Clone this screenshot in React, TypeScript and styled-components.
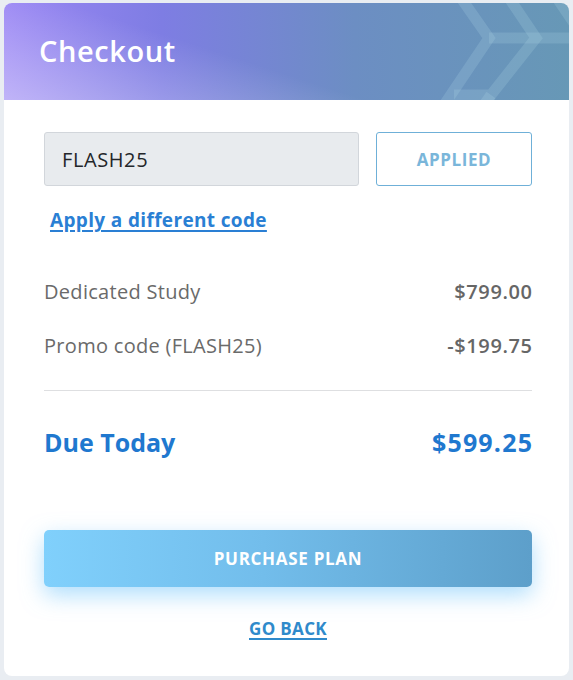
import React from "react";
import styled, { createGlobalStyle } from "styled-components";

const Global = createGlobalStyle`
  html, body { margin: 0; padding: 0; background: #e9edf2; }
  body { font-family: "Open Sans", "Liberation Sans", sans-serif; }
  * { box-sizing: border-box; }
`;

const Page = styled.div`
  padding: 3px 4px 4px 4px;
`;

const Card = styled.div`
  width: 565px;
  height: 673px;
  background: #ffffff;
  border-radius: 8px;
  overflow: hidden;
  display: flex;
  flex-direction: column;
`;

const Header = styled.div`
  position: relative;
  height: 97px;
  padding-left: 35px;
  display: flex;
  align-items: center;
  background:
    linear-gradient(18deg, rgba(255,255,255,0.38) 0%, rgba(255,255,255,0) 42%),
    linear-gradient(90deg, #9a86f4 0%, #7e7de3 28%, #6c8ec3 62%, #6798b6 100%);
  overflow: hidden;
`;

const Title = styled.h1`
  margin: 0 0 2px 0;
  font-size: 29px;
  font-weight: 600;
  color: #ffffff;
  letter-spacing: 0.6px;
  position: relative;
`;

const Pattern = styled.svg`
  position: absolute;
  top: 0;
  left: 0;
  width: 565px;
  height: 97px;
  pointer-events: none;
`;

const Body = styled.div`
  padding: 32px 37px 0 40px;
  display: flex;
  flex-direction: column;
`;

const PromoRow = styled.div`
  display: flex;
  gap: 17px;
`;

const CodeInput = styled.div`
  flex: 1;
  height: 54px;
  background: #e8ebee;
  border: 1px solid #d2d6db;
  border-radius: 3px;
  display: flex;
  align-items: center;
  padding-left: 17px;
  font-size: 20px;
  font-weight: 500;
  letter-spacing: 0.6px;
  color: #23262a;
`;

const OutlineButton = styled.button`
  width: 156px;
  height: 54px;
  background: #ffffff;
  border: 1px solid #6fb0d8;
  border-radius: 3px;
  font-family: inherit;
  font-size: 17px;
  font-weight: 700;
  color: #7ab6da;
  letter-spacing: 0.6px;
`;

const TextLink = styled.a<{ $size: number; $color: string }>`
  font-size: ${(p) => p.$size}px;
  font-weight: 700;
  color: ${(p) => p.$color};
  letter-spacing: 0.35px;
  text-decoration: underline;
  text-underline-offset: 3px;
  text-decoration-thickness: 2px;
  cursor: pointer;
`;

const LinkWrap = styled.div`
  padding: 21px 0 0 6px;
  height: 62px;
`;

const Rows = styled.div`
  display: flex;
  flex-direction: column;
  padding-top: 16px;
`;

const Row = styled.div<{ $total?: boolean }>`
  display: flex;
  justify-content: space-between;
  align-items: center;
  height: ${(p) => (p.$total ? "52px" : "54px")};
  color: ${(p) => (p.$total ? "#1f78cf" : "#6a6a6a")};
  font-size: ${(p) => (p.$total ? "25px" : "20px")};
  font-weight: ${(p) => (p.$total ? 700 : 400)};
  letter-spacing: ${(p) => (p.$total ? "0px" : "0.3px")};
`;

const Amount = styled.span<{ $total?: boolean }>`
  font-weight: ${(p) => (p.$total ? 700 : 600)};
  color: ${(p) => (p.$total ? "#1f78cf" : "#666666")};
  letter-spacing: ${(p) => (p.$total ? "1.2px" : "0.6px")};
  margin-right: ${(p) => (p.$total ? "-1.2px" : "-0.6px")};
`;

const Divider = styled.hr`
  border: none;
  border-top: 1px solid #dedfe1;
  margin: 18px 0 25px 0;
`;

const PrimaryButton = styled.button`
  margin-top: 62px;
  height: 57px;
  border: none;
  border-radius: 5px;
  background: linear-gradient(90deg, #80d0fc 0%, #72bdeb 45%, #5d9fca 100%);
  box-shadow: 0 8px 22px rgba(110, 195, 250, 0.55);
  color: #ffffff;
  font-family: inherit;
  font-size: 17px;
  font-weight: 700;
  letter-spacing: 0.7px;
`;

const Footer = styled.div`
  display: flex;
  justify-content: center;
  padding-top: 30px;
`;

export default function App() {
  return (
    <>
      <Global />
      <Page>
        <Card>
          <Header>
            <Pattern viewBox="0 0 565 97">
              <g stroke="rgba(190,225,240,0.18)" strokeWidth="11" fill="none">
                <polyline points="457,-5 485,35 440,102" />
                <polyline points="485,35 570,35" />
                <polyline points="505,-5 532,35 487,92 450,92" />
                <polyline points="553,-5 580,35" />
                <polyline points="487,92 480,102" />
              </g>
            </Pattern>
            <Title>Checkout</Title>
          </Header>
          <Body>
            <PromoRow>
              <CodeInput>FLASH25</CodeInput>
              <OutlineButton>APPLIED</OutlineButton>
            </PromoRow>
            <LinkWrap>
              <TextLink $size={19} $color="#2a7fd4">Apply a different code</TextLink>
            </LinkWrap>
            <Rows>
              <Row>
                <span>Dedicated Study</span>
                <Amount>$799.00</Amount>
              </Row>
              <Row>
                <span>Promo code (FLASH25)</span>
                <Amount>-$199.75</Amount>
              </Row>
              <Divider />
              <Row $total>
                <span>Due Today</span>
                <Amount $total>$599.25</Amount>
              </Row>
            </Rows>
            <PrimaryButton>PURCHASE PLAN</PrimaryButton>
            <Footer>
              <TextLink $size={17} $color="#2f8acb">GO BACK</TextLink>
            </Footer>
          </Body>
        </Card>
      </Page>
    </>
  );
}
